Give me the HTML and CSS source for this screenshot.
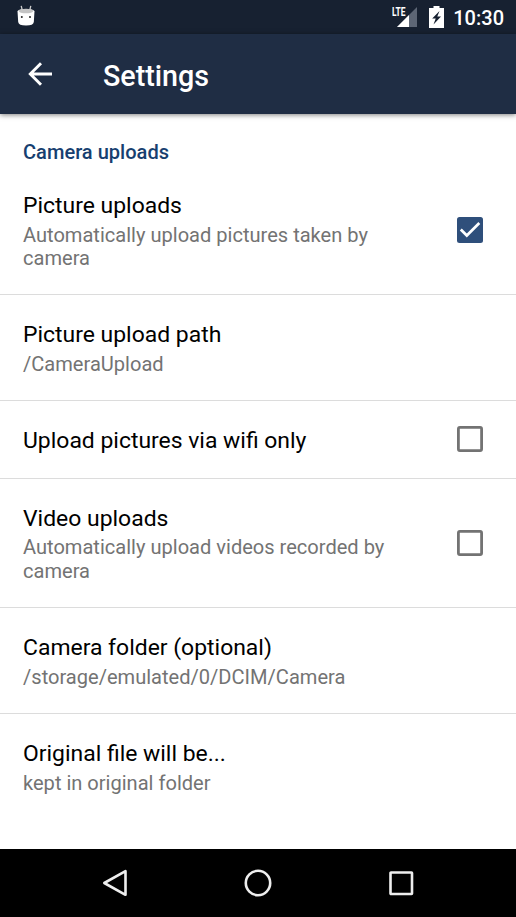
FILE: index.html
```html
<!DOCTYPE html>
<html lang="en">
<head>
<meta charset="utf-8">
<title>Settings</title>
<link rel="stylesheet" href="styles.css">
</head>
<body>
<div class="screen">
  <div class="status-bar">
    <svg class="notification" width="20" height="22" viewBox="0 0 20 22">
      <path d="M5.200 .8L6.200 5M14.800 .8L13.800 5" stroke="#ccc" stroke-width="1.300"/>
      <path d="M1.500 6.500Q1.500 4 10 4T18.500 6.500L17.800 17Q17.500 20.500 10 20.500T2.200 17Z" fill="#fff"/>
      <ellipse cx="10" cy="6" rx="7.200" ry="2.300" fill="#c4c4c4"/>
      <circle cx="5.800" cy="12" r="1" fill="#222"/><circle cx="14" cy="12" r="1" fill="#222"/>
    </svg>
    <div class="signal">
      <span class="lte">LTE</span>
      <svg width="20" height="20" viewBox="0 0 20 20"><path d="M0 20L20 0V20Z" fill="#5d6675"/><path d="M0 20L12 8V20Z" fill="#fff"/></svg>
    </div>
    <svg class="battery" width="15" height="22" viewBox="0 0 15 22"><path d="M4.500 0h6v2H15v20H0V2h4.500Z" fill="#fff"/><path d="M10.500 5L3.200 12.500h3.500L4.500 18.500l7.500-8H8.300Z" fill="#172131"/></svg>
    <span class="time">10:30</span>
  </div>
  <header class="toolbar">
    <svg class="back" width="24" height="24" viewBox="0 0 24 24"><path d="M24 12H2.500M13 1.300L2.300 12 13 22.700" fill="none" stroke="#fff" stroke-width="2.900"/></svg>
    <h1>Settings</h1>
  </header>
  <main>
    <h2>Camera uploads</h2>
    <section class="row first">
      <div class="text"><div class="title">Picture uploads</div><div class="summary">Automatically upload pictures taken by camera</div></div>
      <svg class="box" width="26" height="26" viewBox="0 0 26 26"><rect width="26" height="26" rx="2.500" fill="#2f4f7b"/><path d="M3.800 12.500l6 6L22.300 6" fill="none" stroke="#fff" stroke-width="2.700"/></svg>
    </section>
    <section class="row">
      <div class="text"><div class="title">Picture upload path</div><div class="summary">/CameraUpload</div></div>
    </section>
    <section class="row single">
      <div class="text"><div class="title">Upload pictures via wifi only</div></div>
      <svg class="box" width="26" height="26" viewBox="0 0 26 26"><rect x="1.400" y="1.400" width="23.200" height="23.200" rx="1.500" fill="none" stroke="#737373" stroke-width="2.800"/></svg>
    </section>
    <section class="row double">
      <div class="text"><div class="title">Video uploads</div><div class="summary">Automatically upload videos recorded by camera</div></div>
      <svg class="box" width="26" height="26" viewBox="0 0 26 26"><rect x="1.400" y="1.400" width="23.200" height="23.200" rx="1.500" fill="none" stroke="#737373" stroke-width="2.800"/></svg>
    </section>
    <section class="row">
      <div class="text"><div class="title">Camera folder (optional)</div><div class="summary">/storage/emulated/0/DCIM/Camera</div></div>
    </section>
    <section class="row last">
      <div class="text"><div class="title">Original file will be...</div><div class="summary">kept in original folder</div></div>
    </section>
  </main>
  <nav>
    <svg width="28" height="28" viewBox="0 0 28 28"><path d="M24.500 2.200v23.600L3.300 14Z"/></svg>
    <svg width="28" height="28" viewBox="0 0 28 28"><circle cx="14" cy="14" r="12.200"/></svg>
    <svg width="28" height="28" viewBox="0 0 28 28"><rect x="3.500" y="3.500" width="21.500" height="21.500" rx=".5"/></svg>
  </nav>
</div>
</body>
</html>
```
FILE: styles.css
```css
* { box-sizing: border-box; }
body { margin: 0; background: #fff; font-family: Roboto, sans-serif; }
svg { display: block; flex: none; }
.screen { width: 516px; height: 917px; display: flex; flex-direction: column; overflow: hidden; }
.status-bar { height: 34px; flex: none; background: #172131; display: flex; align-items: flex-start; padding: 0 12px 0 16px; color: #fff; }
.notification { margin-top: 5px; }
.signal { position: relative; margin: 7px 12px 0 auto; }
.lte { position: absolute; left: -5px; top: 0; font: 700 12px/11px Roboto, sans-serif; transform: scaleX(.7); transform-origin: left; }
.battery { margin: 6px 9px 0 0; }
.time { font-size: 20px; line-height: 24px; margin-top: 6px; font-weight: 500; }
.toolbar { height: 80px; flex: none; background: #1f2d44; display: flex; align-items: center; padding-left: 28px; color: #fff; box-shadow: 0 1px 5px rgba(0,0,0,.5); position: relative; }
h1 { margin: 3px 0 0 51px; font-size: 28.67px; line-height: 34px; font-weight: 500; }
main { flex: 1; }
h2 { margin: 0; padding: 26px 23px 0; height: 62px; font-size: 20.07px; line-height: 24px; font-weight: 500; color: #173f70; }
.row { height: 106px; padding: 2px 33px 0 23px; display: flex; align-items: center; border-bottom: 1px solid #dcdcdc; }
.first { height: 119px; padding-top: 0; padding-bottom: 7px; }
.single { height: 78px; padding-top: 1px; }
.double { height: 129px; }
.last { height: 106px; border: 0; padding-top: 1px; }
.text { width: 376px; }
.title { font-size: 22.93px; line-height: 27px; color: #000; }
.summary { font-size: 20.07px; line-height: 23.5px; color: #737373; margin-top: 4.5px; }
.box { margin: -2px 0 0 auto; }
.first .box { margin-top: -3px; }
nav { height: 68px; flex: none; background: #000; display: flex; justify-content: space-between; padding: 19.5px 101px 0; }
nav svg { fill: none; stroke: #eee; stroke-width: 2.6; stroke-linejoin: round; }
```
